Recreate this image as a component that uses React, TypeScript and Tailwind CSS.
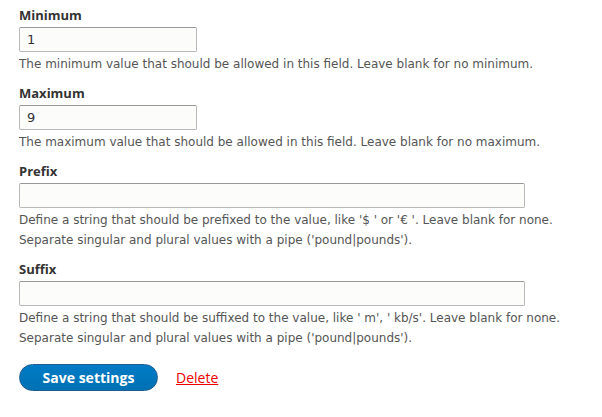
import React from "react";

type Field = {
  label: string;
  value: string;
  wide?: boolean;
  help: string[];
};

const fields: Field[] = [
  {
    label: "Minimum",
    value: "1",
    help: ["The minimum value that should be allowed in this field. Leave blank for no minimum."],
  },
  {
    label: "Maximum",
    value: "9",
    help: ["The maximum value that should be allowed in this field. Leave blank for no maximum."],
  },
  {
    label: "Prefix",
    value: "",
    wide: true,
    help: [
      "Define a string that should be prefixed to the value, like '$ ' or '€ '. Leave blank for none.",
      "Separate singular and plural values with a pipe ('pound|pounds').",
    ],
  },
  {
    label: "Suffix",
    value: "",
    wide: true,
    help: [
      "Define a string that should be suffixed to the value, like ' m', ' kb/s'. Leave blank for none.",
      "Separate singular and plural values with a pipe ('pound|pounds').",
    ],
  },
];

export default function App() {
  return (
    <main className="min-h-screen bg-white pl-[19px] pt-[6px] font-['Open_Sans',sans-serif]">
      {fields.map((f) => (
        <div key={f.label} className="mb-[10px]">
          <label className="block text-[13px] font-bold leading-[18px] text-[#333] mb-[3px]">
            {f.label}
          </label>
          <input
            type="text"
            defaultValue={f.value}
            className={`block h-[25px] ${f.wide ? "w-[506px]" : "w-[178px]"} border border-[#b8b8b8] border-t-[#999] bg-[#fcfcfa] px-[7px] font-['DejaVu_Sans',sans-serif] text-[13px] text-[#333] rounded-[2px] outline-none`}
          />
          <div className="mt-[2px] font-['DejaVu_Sans',sans-serif] text-[12px] leading-[20px] text-[#555]">
            {f.help.map((line) => (
              <div key={line}>{line}</div>
            ))}
          </div>
        </div>
      ))}

      <div className="flex items-center gap-[18px] mt-[16px]">
        <button className="h-[27px] w-[139px] rounded-[20px] border border-[#1e5c90] bg-gradient-to-b from-[#007bc6] to-[#0071b3] text-[14px] font-bold text-white">
          Save settings
        </button>
        <a href="#" className="text-[14px] text-[#e00] underline">
          Delete
        </a>
      </div>
    </main>
  );
}
